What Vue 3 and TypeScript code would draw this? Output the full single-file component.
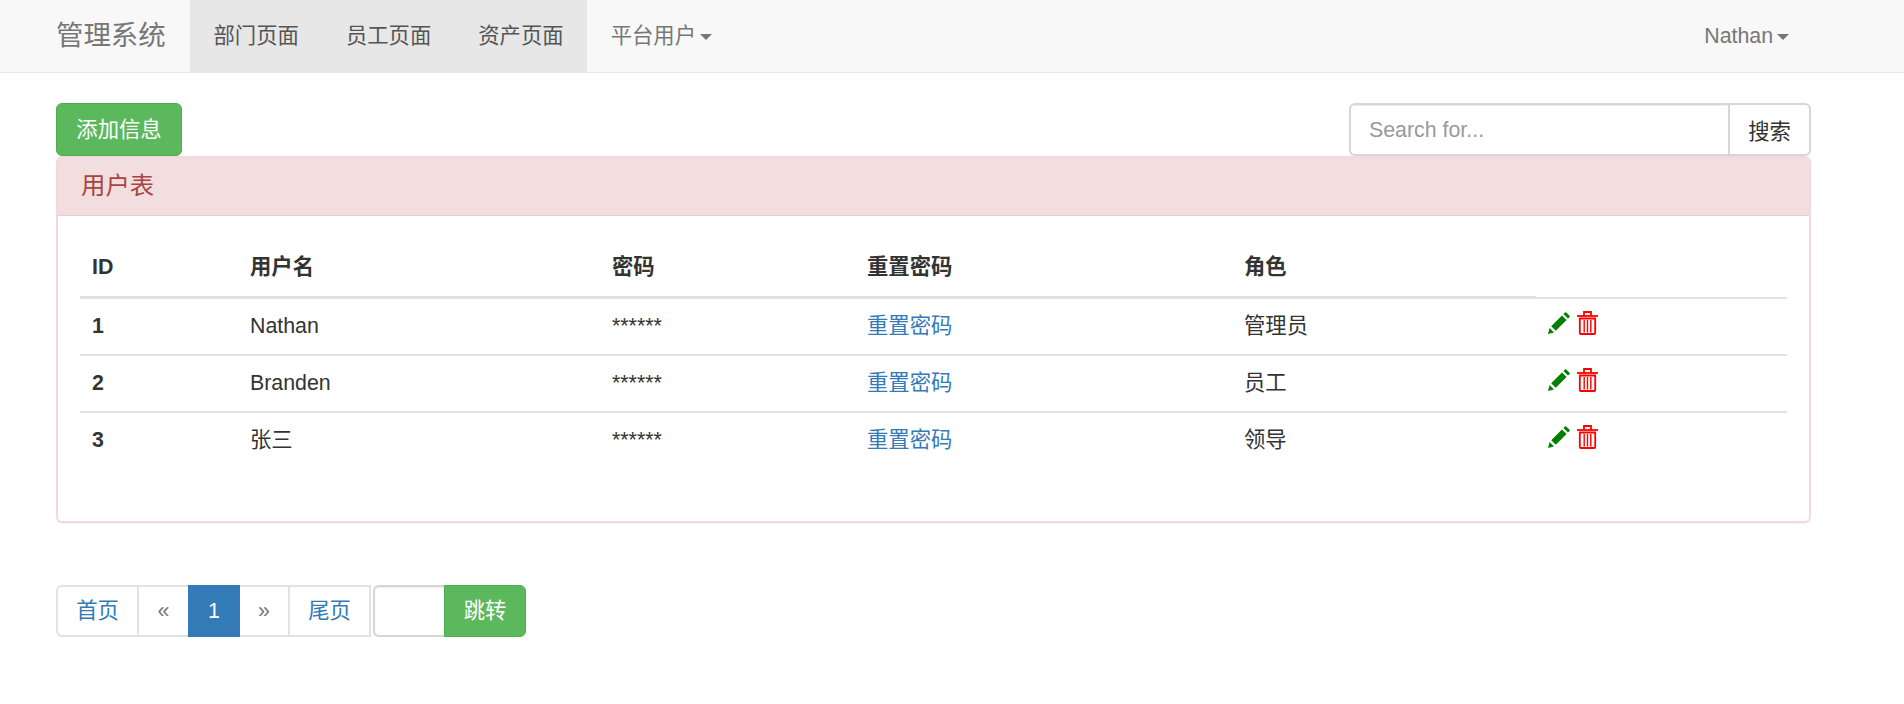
<script setup lang="ts">
interface UserRow {
  id: number
  name: string
  role: string
}

const navItems = ['部门页面', '员工页面', '资产页面']

const users: UserRow[] = [
  { id: 1, name: 'Nathan', role: '管理员' },
  { id: 2, name: 'Branden', role: '员工' },
  { id: 3, name: '张三', role: '领导' },
]

const columns = ['ID', '用户名', '密码', '重置密码', '角色']
</script>

<template>
  <div class="page">
    <nav class="navbar">
      <a class="brand">管理系统</a>
      <ul class="nav">
        <li v-for="item in navItems" :key="item" class="nav-item active">{{ item }}</li>
        <li class="nav-item">平台用户 <span class="caret"></span></li>
      </ul>
      <div class="nav-user">Nathan <span class="caret"></span></div>
    </nav>

    <main class="content">
      <div class="toolbar">
        <button class="btn-success add-btn">添加信息</button>
        <div class="search">
          <input class="search-input" type="text" placeholder="Search for..." />
          <button class="search-btn">搜索</button>
        </div>
      </div>

      <section class="panel">
        <div class="panel-heading">用户表</div>
        <div class="panel-body">
          <table class="table">
            <colgroup>
              <col style="width: 158px" />
              <col style="width: 362px" />
              <col style="width: 255px" />
              <col style="width: 377px" />
              <col style="width: 304px" />
              <col />
            </colgroup>
            <thead>
              <tr>
                <th v-for="col in columns" :key="col">{{ col }}</th>
              </tr>
            </thead>
            <tbody>
              <tr v-for="user in users" :key="user.id">
                <td class="id-cell">{{ user.id }}</td>
                <td>{{ user.name }}</td>
                <td>******</td>
                <td><a class="link">重置密码</a></td>
                <td>{{ user.role }}</td>
                <td>
                  <div class="actions">
                    <svg class="icon-pencil" viewBox="0 0 22 22" width="22" height="22">
                      <path fill="#008000" d="M0 22 L1.6 16 L6 20.4 Z M3.2 14.2 L14 3.4 L18.6 8 L7.8 18.8 Z M15.4 2 L17 0.4 Q17.6 0 18.2 0.4 L21.6 3.8 Q22 4.4 21.6 5 L20 6.6 Z" />
                    </svg>
                    <svg class="icon-trash" viewBox="0 0 21 24" width="21" height="24">
                      <g fill="none" stroke="#ff0000" stroke-width="1.8">
                        <path d="M0 5 H21" />
                        <path d="M7 5 V1 H14 V5" />
                        <path d="M2.8 7.5 V22 Q2.8 23 3.8 23 H17.2 Q18.2 23 18.2 22 V7.5 Z" />
                        <path d="M7.2 9 V21.5 M10.5 9 V21.5 M13.8 9 V21.5" stroke-width="1.4" />
                      </g>
                    </svg>
                  </div>
                </td>
              </tr>
            </tbody>
          </table>
        </div>
      </section>

      <div class="pager">
        <ul class="pagination">
          <li class="page-item page-text">首页</li>
          <li class="page-item page-arrow">«</li>
          <li class="page-item page-current">1</li>
          <li class="page-item page-arrow">»</li>
          <li class="page-item page-text">尾页</li>
        </ul>
        <div class="jump">
          <input class="jump-input" type="text" />
          <button class="btn-success jump-btn">跳转</button>
        </div>
      </div>
    </main>
  </div>
</template>

<style>
html,
body {
  margin: 0;
  background: #fff;
}
</style>

<style scoped>
.page {
  font-family: 'Liberation Sans', 'Noto Sans CJK SC', sans-serif;
  font-size: 21.35px;
  line-height: 30px;
  color: #333;
  height: 704px;
  overflow: hidden;
}

.navbar {
  display: flex;
  align-items: stretch;
  height: 72px;
  padding-left: 56px;
  padding-right: 115px;
  background: #f8f8f8;
  border-bottom: 1px solid #e7e7e7;
}

.brand {
  font-size: 27.45px;
  line-height: 72px;
  color: #777;
  width: 134px;
}

.nav {
  display: flex;
  list-style: none;
  margin: 0;
  padding: 0;
}

.nav-item {
  padding: 0 23.5px;
  line-height: 72px;
  color: #777;
}

.nav-item.active {
  background: #e7e7e7;
  color: #555;
}

.nav-user {
  margin-left: auto;
  line-height: 72px;
  color: #777;
}

.caret {
  display: inline-block;
  width: 0;
  height: 0;
  vertical-align: middle;
  margin-left: -2px;
  border-top: 6px solid #777;
  border-left: 6px solid transparent;
  border-right: 6px solid transparent;
}

.content {
  width: 1755px;
  padding: 30px 0 0 56px;
}

.toolbar {
  display: flex;
  justify-content: space-between;
}

.btn-success {
  font-family: inherit;
  font-size: 21.35px;
  line-height: 30px;
  color: #fff;
  background: #5cb85c;
  border: 1px solid #4cae4c;
  cursor: pointer;
}

.add-btn {
  width: 126px;
  height: 53px;
  padding: 0;
  border-radius: 6px;
}

.search {
  display: flex;
  height: 53px;
  width: 462px;
  box-sizing: border-box;
}

.search-input {
  flex: 1;
  min-width: 0;
  box-sizing: border-box;
  padding: 2px 18px 0;
  font-family: inherit;
  font-size: 21.35px;
  color: #555;
  border: 2px solid #d6d6d6;
  border-right: 0;
  border-radius: 6px 0 0 6px;
  box-shadow: inset 0 1px 1px rgba(0, 0, 0, 0.075);
  outline: none;
}

.search-input::placeholder {
  color: #999;
}

.search-btn {
  width: 83px;
  padding: 0;
  font-family: inherit;
  font-size: 21.35px;
  color: #333;
  background: #fff;
  border: 2px solid #d6d6d6;
  border-radius: 0 6px 6px 0;
}

.panel {
  height: 367px;
  box-sizing: border-box;
  border: 2px solid #f3d9dd;
  border-radius: 6px;
  box-shadow: 0 1px 1px rgba(0, 0, 0, 0.05);
}

.panel-heading {
  height: 58px;
  box-sizing: border-box;
  padding: 0 23px;
  font-size: 24.4px;
  line-height: 56px;
  color: #a94442;
  background: #f2dede;
  border-bottom: 1px solid #ebccd1;
  border-radius: 4px 4px 0 0;
}

.panel-body {
  padding: 24px 22px;
}

.table {
  width: 100%;
  table-layout: fixed;
  border-collapse: collapse;
  border-spacing: 0;
}

.table th {
  padding: 12px 12px 14px;
  text-align: left;
  font-weight: 700;
  border-bottom: 3px solid #e0e0e0;
}

.table td {
  padding: 12px 12px 13px;
  border-top: 2px solid #e2e2e2;
}

.id-cell {
  font-weight: 700;
}

.link {
  color: #337ab7;
}

.actions {
  display: flex;
  align-items: flex-start;
  gap: 7px;
  height: 30px;
}

.icon-pencil {
  margin-top: 1px;
}

.icon-trash {
  margin-top: 0;
}

.pager {
  display: flex;
  margin-top: 62px;
  height: 52px;
}

.pagination {
  display: flex;
  list-style: none;
  margin: 0;
  padding: 0;
}

.page-item {
  display: flex;
  align-items: center;
  justify-content: center;
  box-sizing: border-box;
  height: 52px;
  margin-left: -2px;
  background: #fff;
  border: 2px solid #e2e2e2;
}

.page-text {
  width: 83px;
  color: #337ab7;
}

.page-text:first-child {
  margin-left: 0;
  border-radius: 6px 0 0 6px;
}

.page-arrow {
  width: 52px;
  color: #777;
}

.page-item:nth-child(2) {
  width: 53px;
}

.page-current {
  width: 52px;
  color: #fff;
  background: #337ab7;
  border-color: #337ab7;
  position: relative;
  z-index: 1;
}

.jump {
  display: flex;
  margin-left: 2px;
}

.jump-input {
  width: 71px;
  box-sizing: border-box;
  font-size: 21.35px;
  border: 2px solid #d6d6d6;
  border-right: 0;
  border-radius: 6px 0 0 6px;
  box-shadow: inset 0 1px 1px rgba(0, 0, 0, 0.075);
  outline: none;
}

.jump-btn {
  width: 82px;
  height: 52px;
  padding: 0;
  border-radius: 0 6px 6px 0;
}
</style>
